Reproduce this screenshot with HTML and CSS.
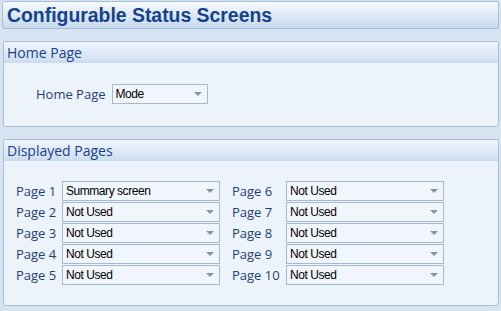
FILE: index.html
```html
<!DOCTYPE html>
<html>
<head>
<meta charset="utf-8">
<link rel="stylesheet" href="styles.css">
</head>
<body>
<div class="screen">
  <div class="title-bar"><h1 class="title">Configurable Status Screens</h1></div>

  <section class="group group-home">
    <div class="group-header">Home Page</div>
    <div class="group-body home-body">
      <span class="label home-label">Home Page</span>
      <div class="combo combo-home"><span class="combo-text">Mode</span><span class="arrow"></span></div>
    </div>
  </section>

  <section class="group group-pages">
    <div class="group-header">Displayed Pages</div>
    <div class="group-body pages-body">
      <div class="pages-grid">
        <span class="label">Page 1</span><div class="combo"><span class="combo-text">Summary screen</span><span class="arrow"></span></div>
        <span class="label label-right">Page 6</span><div class="combo"><span class="combo-text">Not Used</span><span class="arrow"></span></div>
        <span class="label">Page 2</span><div class="combo"><span class="combo-text">Not Used</span><span class="arrow"></span></div>
        <span class="label label-right">Page 7</span><div class="combo"><span class="combo-text">Not Used</span><span class="arrow"></span></div>
        <span class="label">Page 3</span><div class="combo"><span class="combo-text">Not Used</span><span class="arrow"></span></div>
        <span class="label label-right">Page 8</span><div class="combo"><span class="combo-text">Not Used</span><span class="arrow"></span></div>
        <span class="label">Page 4</span><div class="combo"><span class="combo-text">Not Used</span><span class="arrow"></span></div>
        <span class="label label-right">Page 9</span><div class="combo"><span class="combo-text">Not Used</span><span class="arrow"></span></div>
        <span class="label">Page 5</span><div class="combo"><span class="combo-text">Not Used</span><span class="arrow"></span></div>
        <span class="label label-right">Page 10</span><div class="combo"><span class="combo-text">Not Used</span><span class="arrow"></span></div>
      </div>
    </div>
  </section>
</div>
</body>
</html>
```

FILE: styles.css
```css
html, body {
  margin: 0;
  padding: 0;
  background: #d6e3f1;
  width: 501px;
  height: 311px;
  overflow: hidden;
}
.screen {
  display: flex;
  flex-direction: column;
  padding: 1px 2px 0 2px;
  gap: 12px;
}
.title-bar {
  height: 26px;
  border: 1px solid #a9bdd5;
  border-radius: 2px;
  background: linear-gradient(#f6f9fd, #dbe7f5 55%, #c7daef);
  display: flex;
  align-items: center;
  padding-left: 4px;
}
.title {
  margin: 0;
  font-family: "Liberation Sans", Arial, sans-serif;
  font-weight: bold;
  font-size: 19.4px;
  color: #15428b;
  line-height: 1;
  padding-top: 1px;
}
.group {
  margin-left: 1px;
  border: 1px solid #a9bdd5;
  border-radius: 2px 2px 4px 2px;
  background: #ecf3fb;
  display: flex;
  flex-direction: column;
}
.group-header {
  height: 21px;
  background: linear-gradient(#f0f5fb, #dce8f6 60%, #cadcf1);
  font-family: "Open Sans", sans-serif;
  font-size: 14px;
  color: #15428b;
  padding-left: 3px;
  line-height: 22px;
}
.home-body {
  height: 63px;
  display: flex;
  align-items: flex-start;
  padding: 21px 0 0 32px;
  gap: 6px;
  box-sizing: border-box;
}
.label {
  font-family: "Open Sans", sans-serif;
  font-size: 13px;
  color: #1e3f72;
  line-height: 20px;
  white-space: nowrap;
}
.combo {
  height: 18px;
  border: 1px solid #a6b9d0;
  background: #f1f6fc;
  display: flex;
  align-items: center;
  justify-content: space-between;
  padding: 0 4px 0 3px;
}
.combo-home {
  width: 87px;
}
.combo-text {
  font-family: "Liberation Sans", Arial, sans-serif;
  font-size: 12px;
  color: #000;
  letter-spacing: -0.45px;
  white-space: nowrap;
}
.arrow {
  width: 0;
  height: 0;
  border-left: 4px solid transparent;
  border-right: 4px solid transparent;
  border-top: 4px solid #8093ad;
  margin-right: 1px;
}
.pages-body {
  height: 144px;
  box-sizing: border-box;
  padding: 20px 0 0 12px;
}
.pages-grid {
  display: grid;
  grid-template-columns: 46px 158px 66px 158px;
  grid-auto-rows: 20px;
  row-gap: 1px;
  column-gap: 0;
}
.pages-grid .combo {
  box-sizing: border-box;
  height: 20px;
}
.label-right {
  padding-left: 12px;
}
```
